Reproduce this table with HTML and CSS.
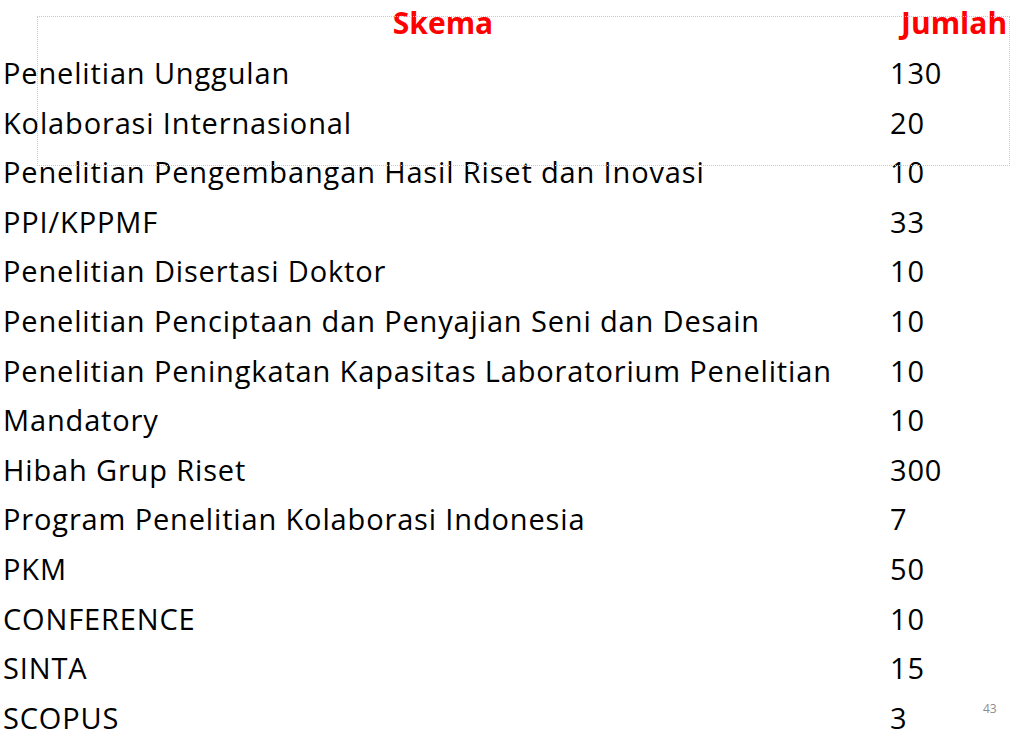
FILE: index.html
```html
<!DOCTYPE html>
<html>
<head>
<meta charset="utf-8">
<link rel="stylesheet" href="styles.css">
</head>
<body>
<div class="slide">
  <div class="placeholder"></div>
  <div class="head">
    <div class="h-skema">Skema</div>
    <div class="h-jumlah">Jumlah</div>
  </div>
  <div class="table">
    <div class="name">Penelitian Unggulan</div><div class="num">130</div>
    <div class="name">Kolaborasi Internasional</div><div class="num">20</div>
    <div class="name">Penelitian Pengembangan Hasil Riset dan Inovasi</div><div class="num">10</div>
    <div class="name">PPI/KPPMF</div><div class="num">33</div>
    <div class="name">Penelitian Disertasi Doktor</div><div class="num">10</div>
    <div class="name">Penelitian Penciptaan dan Penyajian Seni dan Desain</div><div class="num">10</div>
    <div class="name">Penelitian Peningkatan Kapasitas Laboratorium Penelitian</div><div class="num">10</div>
    <div class="name">Mandatory</div><div class="num">10</div>
    <div class="name">Hibah Grup Riset</div><div class="num">300</div>
    <div class="name">Program Penelitian Kolaborasi Indonesia</div><div class="num">7</div>
    <div class="name">PKM</div><div class="num">50</div>
    <div class="name">CONFERENCE</div><div class="num">10</div>
    <div class="name">SINTA</div><div class="num">15</div>
    <div class="name">SCOPUS</div><div class="num">3</div>
  </div>
  <div class="pagenum">43</div>
</div>
</body>
</html>
```

FILE: styles.css
```css
html, body {
  margin: 0;
  padding: 0;
  background: #ffffff;
}
.slide {
  position: relative;
  width: 1024px;
  height: 743px;
  overflow: hidden;
  font-family: "Open Sans", Lato, sans-serif;
  font-variant-ligatures: none;
  color: #000;
}
.placeholder {
  position: absolute;
  left: 37px;
  top: 16px;
  width: 971px;
  height: 148px;
  border: 1px dotted #c8c8c8;
}
.head {
  display: grid;
  grid-template-columns: 886px 1fr;
  padding-top: 3px;
  font-weight: bold;
  color: #ff0000;
  font-size: 30px;
  line-height: 40px;
}
.h-skema {
  text-align: center;
}
.h-jumlah {
  padding-left: 15px;
}
.table {
  display: grid;
  grid-template-columns: 887px 1fr;
  padding-left: 3px;
  padding-top: 5px;
  font-size: 29px;
  letter-spacing: 0.85px;
  line-height: 49.6px;
}
.pagenum {
  position: absolute;
  left: 983px;
  top: 700px;
  font-size: 12px;
  color: #8c8c8c;
}
```
